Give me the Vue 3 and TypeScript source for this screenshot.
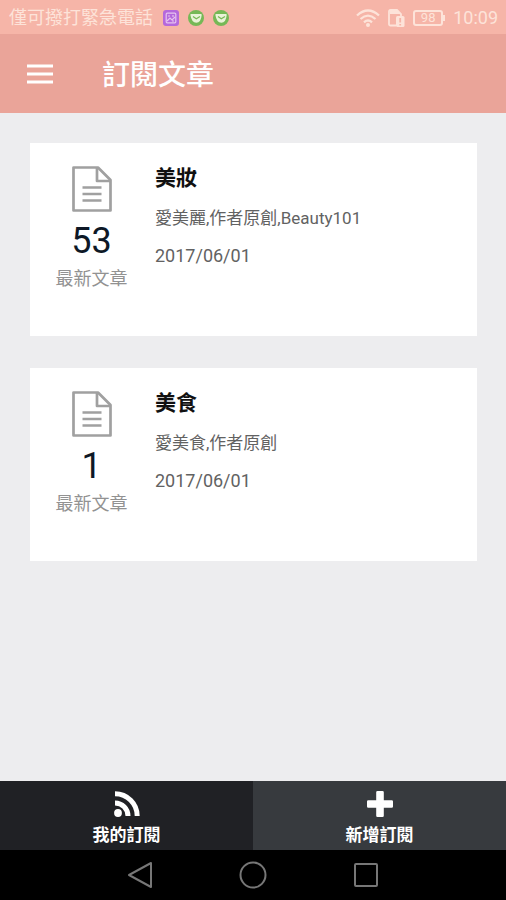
<script setup lang="ts">
interface Subscription {
  id: number
  title: string
  tags: string[]
  date: string
  count: number
}

const subscriptions: Subscription[] = [
  { id: 1, title: '美妝', tags: ['愛美麗', '作者原創', 'Beauty101'], date: '2017/06/01', count: 53 },
  { id: 2, title: '美食', tags: ['愛美食', '作者原創'], date: '2017/06/01', count: 1 },
]
</script>

<template>
  <div class="screen">
    <div class="status">
      <span class="carrier">僅可撥打緊急電話</span>
      <svg class="badge" viewBox="0 0 16 16" aria-hidden="true">
        <rect width="16" height="16" rx="3" fill="#b468dc" />
        <rect x="3.2" y="3.2" width="9.6" height="9.6" rx="1" fill="none" stroke="#e6c3f0" stroke-width="1.2" />
        <path d="M4 11l3-3 2 2 3-3M5 6h2M10 5v2M9 11h2" fill="none" stroke="#e6c3f0" stroke-width="1.2" />
      </svg>
      <svg v-for="n in 2" :key="n" class="badge" viewBox="0 0 16 16" aria-hidden="true">
        <circle cx="8" cy="8" r="8" fill="#76b856" />
        <path d="M3 4h10q.8 0 .7.900Q13 12.500 8.300 12.800 3.600 12.500 2.400 4.900 2.300 4 3 4z" fill="#e9f3d8" />
        <path d="M5 6.500l3.300 2.300 3.700-2.300" fill="none" stroke="#76b856" stroke-width="1.300" />
      </svg>
      <div class="system">
        <svg class="wifi" viewBox="0 0 24 18" aria-hidden="true">
          <g fill="none" stroke="currentColor" stroke-width="2.300">
            <path d="M1 6.500Q12-3.500 23 6.500" />
            <path d="M4.500 10Q12 3.300 19.500 10" />
            <path d="M8 13.300Q12 9.800 16 13.300" />
          </g>
          <circle cx="12" cy="16" r="2" fill="currentColor" />
        </svg>
        <svg class="sim" viewBox="0 0 17 18" aria-hidden="true">
          <path d="M8 16.500H2.500Q1 16.500 1 15V2.500Q1 1 2.500 1H9l4 4v2" fill="none" stroke="currentColor" stroke-width="1.800" />
          <path d="M2 1h7l4 4H2z" fill="currentColor" />
          <rect x="8" y="7" width="8.500" height="11" rx="1.500" fill="currentColor" />
          <path d="M12.200 9v4.500M12.200 15v1.500" stroke="#f6b5a8" stroke-width="1.800" />
        </svg>
        <div class="battery"><span>98</span></div>
        <time>10:09</time>
      </div>
    </div>

    <header class="appbar">
      <button class="menu" type="button" aria-label="選單">
        <svg viewBox="0 0 28 20" aria-hidden="true">
          <path d="M1 2h26M1 10h26M1 18h26" stroke="currentColor" stroke-width="3" />
        </svg>
      </button>
      <h1>訂閱文章</h1>
    </header>

    <main class="list">
      <article v-for="item in subscriptions" :key="item.id" class="card">
        <div class="summary">
          <svg class="doc" viewBox="0 0 40 46" aria-hidden="true">
            <g fill="none" stroke="currentColor" stroke-width="2.700" stroke-linejoin="round">
              <path d="M1.500 1.500H26L38.500 14v30.500h-37z" />
              <path d="M25 2v13h13M10.500 21.500h19M10.500 28h19M10.500 34.500h19" />
            </g>
          </svg>
          <strong class="count">{{ item.count }}</strong>
          <span class="caption">最新文章</span>
        </div>
        <div class="details">
          <h2>{{ item.title }}</h2>
          <p class="tags">{{ item.tags.join(',') }}</p>
          <time class="date">{{ item.date }}</time>
        </div>
      </article>
    </main>

    <nav class="tabs">
      <button class="tab active" type="button">
        <svg viewBox="0 0 28 28" aria-hidden="true">
          <circle cx="5" cy="23" r="3.900" fill="currentColor" />
          <path d="M2 13A13 13 0 0 1 15 26M2 3.800A22.200 22.200 0 0 1 24.200 26" fill="none" stroke="currentColor" stroke-width="5" stroke-linecap="butt" />
        </svg>
        <span>我的訂閱</span>
      </button>
      <button class="tab" type="button">
        <svg viewBox="0 0 28 28" aria-hidden="true">
          <path d="M11.500 1h5q1.300 0 1.300 1.300v7.900h7.900q1.300 0 1.300 1.300v5q0 1.300-1.300 1.300h-7.900v7.900q0 1.300-1.300 1.300h-5q-1.300 0-1.300-1.300v-7.900H2.300Q1 17.800 1 16.500v-5q0-1.300 1.300-1.300h7.900V2.300Q10.200 1 11.500 1z" fill="currentColor" />
        </svg>
        <span>新增訂閱</span>
      </button>
    </nav>

    <div class="system-nav">
      <button type="button" aria-label="返回">
        <svg viewBox="0 0 28 28" aria-hidden="true">
          <path d="M25 2v24L3 14z" />
        </svg>
      </button>
      <button type="button" aria-label="主畫面">
        <svg viewBox="0 0 28 28" aria-hidden="true">
          <circle cx="14" cy="14" r="12.500" />
        </svg>
      </button>
      <button type="button" aria-label="最近使用">
        <svg viewBox="0 0 28 28" aria-hidden="true">
          <rect x="3" y="3" width="22" height="22" rx="1" />
        </svg>
      </button>
    </div>
  </div>
</template>

<style>
body {
  margin: 0;
}
</style>

<style scoped>
.screen {
  display: flex;
  flex-direction: column;
  min-height: 100vh;
  background: #ededef;
  font-family: Roboto, "Noto Sans CJK TC", sans-serif;
}

button {
  margin: 0;
  padding: 0;
  border: 0;
  background: none;
  color: inherit;
  font: inherit;
}

svg {
  display: block;
  flex: none;
}

h1,
h2,
p {
  margin: 0;
}

.status {
  display: flex;
  align-items: center;
  gap: 9px;
  box-sizing: border-box;
  height: 34px;
  padding: 2px 8px 0 9px;
  background: #f6b5a8;
  color: #fde3d9;
  font-size: 18px;
  line-height: 32px;
}

.carrier {
  margin-right: 1px;
}

.badge {
  width: 16px;
  height: 16px;
}

.system {
  display: flex;
  align-items: center;
  gap: 8px;
  margin-left: auto;
}

.wifi {
  width: 24px;
  height: 18px;
}

.sim {
  width: 17px;
  height: 18px;
}

.battery {
  position: relative;
  box-sizing: border-box;
  width: 30px;
  height: 16px;
  margin-right: 2px;
  border: 2px solid currentColor;
  border-radius: 3px;
  font-size: 13px;
  line-height: 12px;
  text-align: center;
}

.battery::after {
  content: "";
  position: absolute;
  top: 3px;
  right: -4px;
  width: 2px;
  height: 6px;
  background: currentColor;
}

.appbar {
  display: flex;
  align-items: center;
  gap: 48px;
  height: 79px;
  padding: 0 26px;
  background: #eaa499;
  color: #fff;
}

.menu svg {
  width: 28px;
  height: 20px;
}

h1 {
  padding-top: 4px;
  font-size: 28px;
  font-weight: 500;
  line-height: 40px;
}

.list {
  display: flex;
  flex: 1;
  flex-direction: column;
  gap: 32px;
  padding: 30px 29px 30px 30px;
}

.card {
  display: flex;
  gap: 27px;
  box-sizing: border-box;
  min-height: 193px;
  padding: 22px 25px;
  background: #fff;
}

.summary {
  display: flex;
  flex-direction: column;
  align-items: center;
  width: 73px;
}

.doc {
  width: 40px;
  height: 46px;
  margin-top: 1px;
  color: #a0a0a0;
}

.count {
  margin-top: 7px;
  color: #0d1826;
  font-size: 36px;
  font-weight: 400;
  line-height: 44px;
}

.caption {
  margin-top: 3px;
  color: #929292;
  font-size: 18px;
  line-height: 26px;
}

.details {
  flex: 1;
  color: #626262;
}

h2 {
  color: #111;
  font-size: 21px;
  font-weight: 700;
  line-height: 26px;
}

.tags {
  margin-top: 15px;
  font-size: 17px;
  line-height: 24px;
}

.date {
  display: block;
  margin-top: 14px;
  font-size: 18px;
  line-height: 24px;
}

.tabs {
  display: flex;
  height: 69px;
}

.tab {
  display: flex;
  flex: 1;
  flex-direction: column;
  align-items: center;
  gap: 5px;
  padding-top: 9px;
  background: #373a3e;
  color: #fff;
  font-size: 17px;
  font-weight: 700;
  line-height: 24px;
}

.tab.active {
  background: #202125;
}

.tab svg {
  width: 28px;
  height: 28px;
}

.system-nav {
  display: flex;
  align-items: center;
  justify-content: center;
  gap: 85px;
  height: 50px;
  background: #000;
  color: #777;
}

.system-nav svg {
  width: 28px;
  height: 28px;
  fill: none;
  stroke: currentColor;
  stroke-width: 2;
  stroke-linejoin: round;
}
</style>
